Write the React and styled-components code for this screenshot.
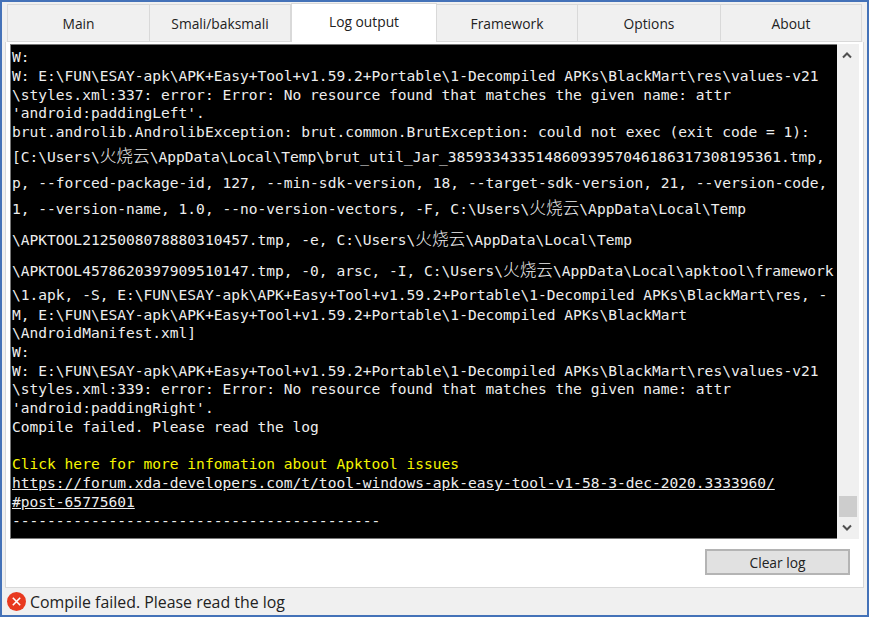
import React from 'react'
import styled, { createGlobalStyle } from 'styled-components'

const GlobalStyle = createGlobalStyle`
  html, body { margin: 0; padding: 0; background: #f0f0f0; }
  body { font-family: "Open Sans", "Noto Sans", sans-serif; }
`

const Window = styled.div`
  box-sizing: border-box;
  width: 869px;
  height: 617px;
  border-style: solid;
  border-color: #4472b8;
  border-width: 2px 2px 2px 2px;
  background: #f0f0f0;
  display: flex;
  flex-direction: column;
  overflow: hidden;
`

const TabBar = styled.div`
  display: flex;
  height: 40px;
  padding-left: 5px;
  padding-right: 5px;
  flex: none;
`

const Tab = styled.div`
  box-sizing: border-box;
  width: ${(p) => p.$w}px;
  margin-top: ${(p) => (p.$active ? 1 : 2)}px;
  height: ${(p) => (p.$active ? 39 : 38)}px;
  display: flex;
  align-items: center;
  justify-content: center;
  font-size: 13.8px;
  color: #222;
  background: ${(p) => (p.$active ? '#fff' : '#f0f0f0')};
  border: 1px solid #d9d9d9;
  border-bottom: ${(p) => (p.$active ? 'none' : '1px solid #d9d9d9')};
  border-left-width: ${(p) => (p.$first || p.$active ? 1 : 0)}px;
  padding-bottom: ${(p) => (p.$active ? 3 : 0)}px;
`

const Panel = styled.div`
  flex: 1;
  margin: 0 3px 0 3px;
  background: #fff;
  border: 1px solid #d9d9d9;
  border-top: none;
  display: flex;
  flex-direction: column;
  padding: 2px 4px 0 4px;
  min-height: 0;
`

const LogRow = styled.div`
  display: flex;
  height: 495px;
  flex: none;
`

const LogBox = styled.div`
  width: 828px;
  box-sizing: border-box;
  background: #000;
  border-top: 1px solid #777;
  border-left: 1px solid #777;
  border-bottom: 1px solid #777;
  padding: 3px 0 0 1px;
  overflow: hidden;
  font-family: "DejaVu Sans Mono", "Liberation Mono", "Noto Sans CJK SC", monospace;
  font-size: 14.57px;
  color: #eee;
`

const Line = styled.div`
  height: ${(p) => p.$h || 18.75}px;
  line-height: ${(p) => p.$h || 18.75}px;
  white-space: pre;
  color: ${(p) => p.$color || 'inherit'};
  text-decoration: ${(p) => (p.$link ? 'underline' : 'none')};
`

const Cjk = styled.span`
  font-family: "Noto Sans CJK SC", sans-serif;
  font-size: 16.7px;
  font-weight: 300;
  line-height: 1;
`

const ScrollBar = styled.div`
  width: 22px;
  box-sizing: border-box;
  padding-right: 2px;
  background: #f0f0f0;
  display: flex;
  flex-direction: column;
  align-items: stretch;
`

const ScrollBtn = styled.div`
  height: 22px;
  display: flex;
  align-items: center;
  justify-content: center;
  flex: none;
`

const ScrollTrack = styled.div`
  flex: 1;
  display: flex;
  flex-direction: column;
  justify-content: flex-end;
  padding: 0 0 0 2px;
`

const ScrollThumb = styled.div`
  height: 21px;
  background: #cdcdcd;
`

const ButtonRow = styled.div`
  flex: 1;
  display: flex;
  justify-content: flex-end;
  align-items: flex-start;
  padding: 10px 9px 0 0;
`

const ClearButton = styled.button`
  box-sizing: border-box;
  width: 145px;
  height: 26px;
  background: #e1e1e1;
  border: 2px solid #b4b4b4;
  font-family: "Open Sans", "Noto Sans", sans-serif;
  font-size: 13.8px;
  color: #222;
  padding: 0;
`

const StatusBar = styled.div`
  flex: none;
  height: 27px;
  display: flex;
  align-items: center;
  gap: 4px;
  padding-left: 5px;
  font-size: 15.9px;
  color: #222;
`

const tabs = [
  { label: 'Main', w: 143, first: true },
  { label: 'Smali/baksmali', w: 141 },
  { label: 'Log output', w: 146, active: true },
  { label: 'Framework', w: 141 },
  { label: 'Options', w: 143 },
  { label: 'About', w: 141 },
]

const Chevron = ({ up }) => (
  <svg width="12" height="8" viewBox="0 0 12 8">
    <polyline
      points={up ? '2,6.5 6,2.5 10,6.5' : '2,1.5 6,5.5 10,1.5'}
      fill="none"
      stroke="#505050"
      strokeWidth="2"
    />
  </svg>
)

const ErrorIcon = () => (
  <svg width="19" height="19" viewBox="0 0 19 19">
    <circle cx="9.5" cy="9.5" r="9.5" fill="#e8391f" />
    <path d="M5.8 5.8 L13.2 13.2 M13.2 5.8 L5.8 13.2" stroke="#fff" strokeWidth="1.6" />
  </svg>
)

function App() {
  return (
    <>
      <GlobalStyle />
      <Window>
        <TabBar>
          {tabs.map((t) => (
            <Tab key={t.label} $w={t.w} $active={t.active} $first={t.first}>
              {t.label}
            </Tab>
          ))}
        </TabBar>
        <Panel>
          <LogRow>
            <LogBox>
              <Line>W:</Line>
              <Line>W: E:\FUN\ESAY-apk\APK+Easy+Tool+v1.59.2+Portable\1-Decompiled APKs\BlackMart\res\values-v21</Line>
              <Line>\styles.xml:337: error: Error: No resource found that matches the given name: attr</Line>
              <Line>'android:paddingLeft'.</Line>
              <Line>brut.androlib.AndrolibException: brut.common.BrutException: could not exec (exit code = 1):</Line>
              <Line $h={30}>[C:\Users\<Cjk>火烧云</Cjk>\AppData\Local\Temp\brut_util_Jar_38593343351486093957046186317308195361.tmp,</Line>
              <Line $h={21}>p, --forced-package-id, 127, --min-sdk-version, 18, --target-sdk-version, 21, --version-code,</Line>
              <Line $h={31}>1, --version-name, 1.0, --no-version-vectors, -F, C:\Users\<Cjk>火烧云</Cjk>\AppData\Local\Temp</Line>
              <Line $h={31}>\APKTOOL2125008078880310457.tmp, -e, C:\Users\<Cjk>火烧云</Cjk>\AppData\Local\Temp</Line>
              <Line $h={31}>\APKTOOL4578620397909510147.tmp, -0, arsc, -I, C:\Users\<Cjk>火烧云</Cjk>\AppData\Local\apktool\framework</Line>
              <Line>\1.apk, -S, E:\FUN\ESAY-apk\APK+Easy+Tool+v1.59.2+Portable\1-Decompiled APKs\BlackMart\res, -</Line>
              <Line $h={19.5}>M, E:\FUN\ESAY-apk\APK+Easy+Tool+v1.59.2+Portable\1-Decompiled APKs\BlackMart</Line>
              <Line>\AndroidManifest.xml]</Line>
              <Line>W:</Line>
              <Line>W: E:\FUN\ESAY-apk\APK+Easy+Tool+v1.59.2+Portable\1-Decompiled APKs\BlackMart\res\values-v21</Line>
              <Line>\styles.xml:339: error: Error: No resource found that matches the given name: attr</Line>
              <Line>'android:paddingRight'.</Line>
              <Line>Compile failed. Please read the log</Line>
              <Line> </Line>
              <Line $color="#f5f500">Click here for more infomation about Apktool issues</Line>
              <Line $link>https://forum.xda-developers.com/t/tool-windows-apk-easy-tool-v1-58-3-dec-2020.3333960/</Line>
              <Line $link>#post-65775601</Line>
              <Line>------------------------------------------</Line>
            </LogBox>
            <ScrollBar>
              <ScrollBtn><Chevron up /></ScrollBtn>
              <ScrollTrack><ScrollThumb /></ScrollTrack>
              <ScrollBtn><Chevron /></ScrollBtn>
            </ScrollBar>
          </LogRow>
          <ButtonRow>
            <ClearButton>Clear log</ClearButton>
          </ButtonRow>
        </Panel>
        <StatusBar>
          <ErrorIcon />
          <span>Compile failed. Please read the log</span>
        </StatusBar>
      </Window>
    </>
  )
}

export default App
